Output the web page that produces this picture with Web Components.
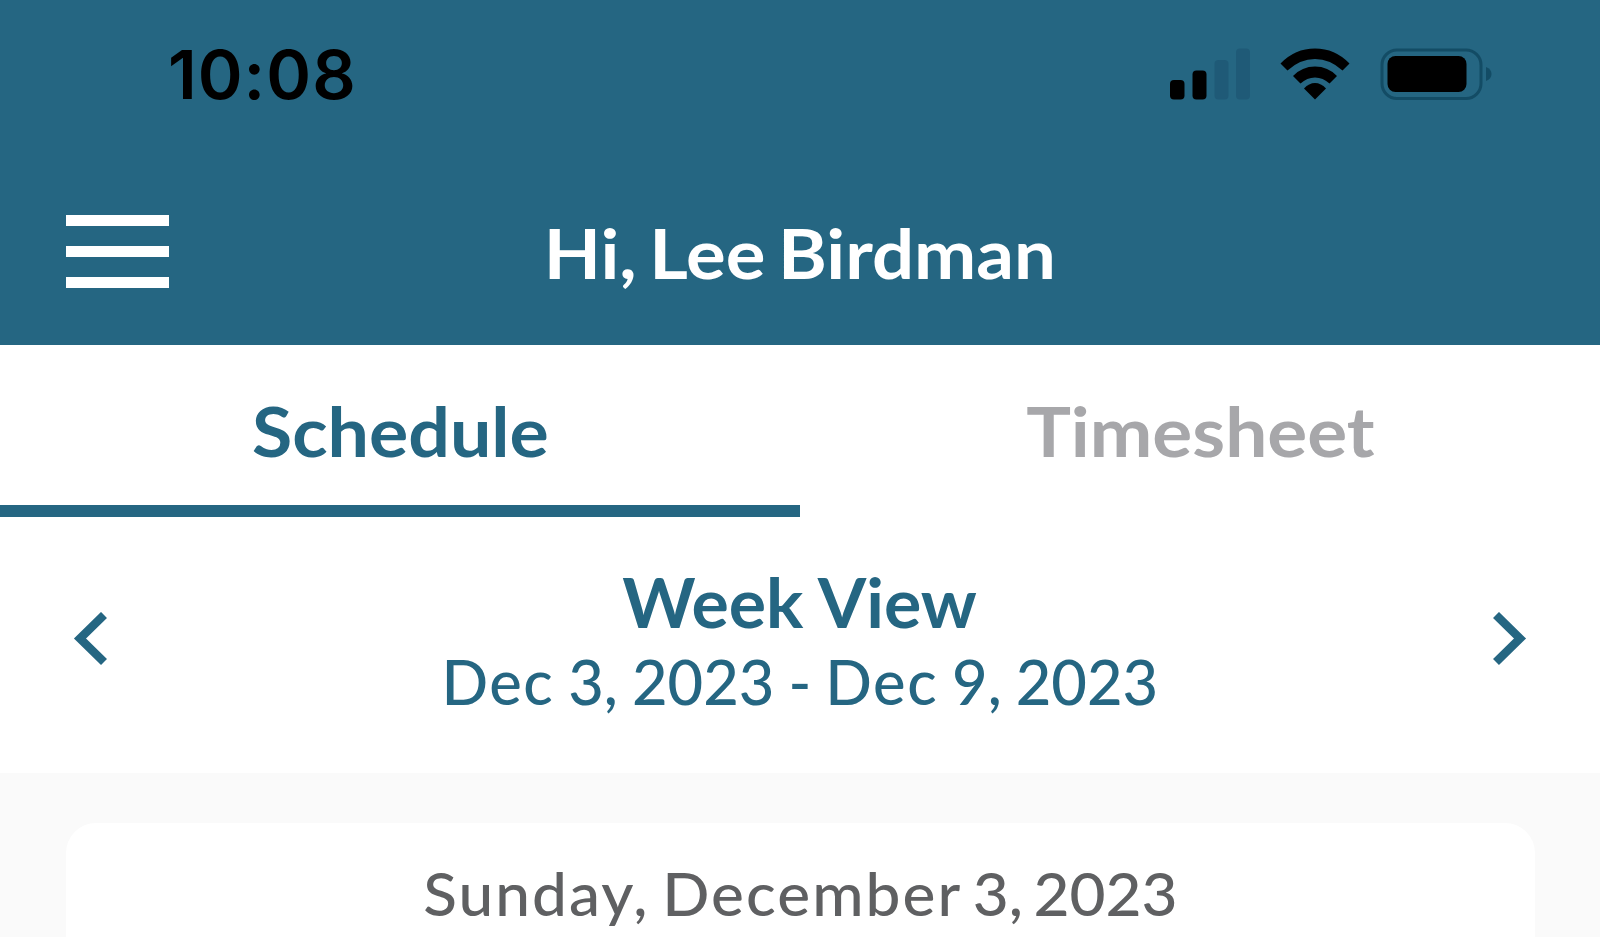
<!DOCTYPE html>
<html lang="en">
<head>
<meta charset="utf-8">
<title>Schedule</title>
<style>
    html, body {
        margin: 0;
        height: 100%;
        overflow: hidden;
        background: #fff;
    }
</style>
</head>
<body>
<schedule-app></schedule-app>

<script>
(function () {
    function define(name, html) {
        const template = document.createElement("template");
        template.innerHTML = html;

        customElements.define(name, class extends HTMLElement {
            constructor() {
                super();
                this.attachShadow({ mode: "open" });
                this.shadowRoot.appendChild(template.content.cloneNode(true));
            }
        });
    }

    define("status-bar", `
        <style>
            :host {
                display: flex;
                box-sizing: border-box;
                align-items: center;
                justify-content: space-between;
                height: 147px;
                padding: 0 108px 0 168px;
                color: #000;
                font: 600 68px/80px Inter, "Liberation Sans", sans-serif;
            }
            svg {
                display: block;
            }
            .time {
                letter-spacing: 1px;
            }
            .icons {
                display: flex;
                align-items: center;
                gap: 30px;
            }
        </style>
        <span class="time"><slot></slot></span>
        <div class="icons">
            <svg width="80" height="52" viewBox="0 0 80 52">
                <rect x="0" y="32" width="14.5" height="19.5" rx="4"/>
                <rect x="22.5" y="22.5" width="14" height="29" rx="4"/>
                <g fill="#1f5a77">
                    <rect x="44.5" y="12" width="14" height="39.5" rx="4"/>
                    <rect x="66" y="0.5" width="14" height="51" rx="4"/>
                </g>
            </svg>
            <svg width="70" height="52" viewBox="0 0 70 52">
                <path d="M0.5 15.5Q15 0.5 35 0.5T69.500 15.500L62.500 22.500Q50 11 35 11T7.500 22.500Z"/>
                <path d="M13 28Q22 18.500 35 18.500T57 28L49.500 35.500Q43 29.500 35 29.500T20.500 35.500Z"/>
                <path d="M24 40.500Q29 35 35 35T46 40.500L35 51.500Z"/>
            </svg>
            <svg width="112" height="52" viewBox="0 0 112 52">
                <rect x="2" y="2" width="99" height="48.500" rx="15" fill="none" stroke="#134c65" stroke-width="3"/>
                <rect x="7.500" y="8" width="79" height="36" rx="8"/>
                <path d="M106 19Q111.500 21 111.500 26T106 33Z" fill="#134c65"/>
            </svg>
        </div>
    `);

    define("nav-header", `
        <style>
            :host {
                display: grid;
                grid-template-columns: 103px 1fr 103px;
                align-items: center;
                box-sizing: border-box;
                height: 198px;
                padding: 11px 66px 0;
                color: #fff;
                font-size: 69px;
                font-weight: 700;
                line-height: 80px;
            }
            .menu {
                display: flex;
                flex-direction: column;
                gap: 20px;
            }
            .menu i {
                height: 11px;
                background: #fff;
            }
            .title {
                padding-top: 3px;
                text-align: center;
                white-space: nowrap;
            }
        </style>
        <div class="menu"><i></i><i></i><i></i></div>
        <div class="title"><slot></slot></div>
    `);

    define("tab-item", `
        <style>
            :host {
                display: block;
                flex: 1;
                box-sizing: border-box;
                height: 172px;
                padding-top: 46px;
                border-bottom: 12px solid transparent;
                color: #a7a7aa;
                font-size: 68px;
                font-weight: 700;
                line-height: 80px;
                text-align: center;
            }
            :host([active]) {
                color: var(--brand);
                border-color: var(--brand);
            }
        </style>
        <slot></slot>
    `);

    define("week-picker", `
        <style>
            :host {
                display: flex;
                align-items: center;
                justify-content: space-between;
                box-sizing: border-box;
                height: 256px;
                padding: 0 72px 10px;
                color: var(--brand);
                text-align: center;
                white-space: nowrap;
                line-height: 80px;
            }
            .text {
                padding-top: 4px;
            }
            .title {
                font-size: 68px;
                font-weight: 700;
            }
            .range {
                font-size: 61px;
                font-weight: 500;
            }
            svg {
                display: block;
                fill: none;
                stroke: currentColor;
                stroke-width: 8.5;
            }
        </style>
        <svg width="36" height="56" viewBox="0 0 36 56"><path d="M32 3L8 26.500L32 50"/></svg>
        <div class="text">
            <div class="title"><slot name="title"></slot></div>
            <div class="range"><slot></slot></div>
        </div>
        <svg width="36" height="56" viewBox="0 0 36 56"><path d="M4 3L28 26.500L4 50"/></svg>
    `);

    define("day-card", `
        <style>
            :host {
                display: block;
                box-sizing: border-box;
                height: 240px;
                padding-top: 30px;
                border-radius: 30px;
                background: #fff;
                color: #5f6062;
                font-size: 60px;
                font-weight: 500;
                line-height: 80px;
                text-align: center;
                white-space: nowrap;
            }
        </style>
        <slot></slot>
    `);

    define("schedule-app", `
        <style>
            :host {
                --brand: #256682;
                display: flex;
                flex-direction: column;
                height: 937px;
                overflow: hidden;
                font-family: Lato, "Open Sans", sans-serif;
            }
            header {
                background: var(--brand);
            }
            nav {
                display: flex;
            }
            main {
                flex: 1;
                min-height: 0;
                padding: 50px 65px 0 66px;
                background: #fafafa;
            }
            /* widen Lato to the proportions of a geometric sans */
            span {
                display: inline-block;
            }
            b {
                font-weight: inherit;
            }
            .hi {
                word-spacing: -5px;
                transform: scaleX(1.077);
            }
            .schedule {
                transform: scaleX(1.08);
            }
            .timesheet {
                transform: scaleX(1.1);
            }
            .week {
                transform: scaleX(1.027);
            }
            .range {
                word-spacing: -1.5px;
                transform: scaleX(1.007);
            }
            .range b {
                letter-spacing: 1.5px;
            }
            .day {
                word-spacing: -5px;
                transform: scaleX(1.035);
            }
            .day b {
                letter-spacing: 2px;
            }
        </style>
        <header>
            <status-bar>10:08</status-bar>
            <nav-header><span class="hi">Hi, Lee Birdman</span></nav-header>
        </header>
        <nav>
            <tab-item active><span class="schedule">Schedule</span></tab-item>
            <tab-item><span class="timesheet">Timesheet</span></tab-item>
        </nav>
        <week-picker>
            <span class="week" slot="title">Week View</span>
            <span class="range"><b>Dec</b> 3, 2023 - <b>Dec</b> 9, 2023</span>
        </week-picker>
        <main>
            <day-card><span class="day"><b>Sunday, December</b> 3, 2023</span></day-card>
        </main>
    `);
})();
</script>
</body>
</html>
